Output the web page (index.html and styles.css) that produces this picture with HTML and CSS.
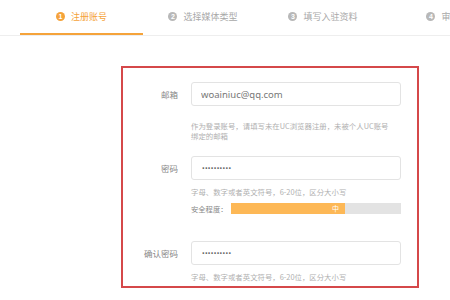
FILE: index.html
```html
<!DOCTYPE html>
<html lang="zh-CN">
<head>
    <meta charset="UTF-8">
    <meta name="viewport" content="width=device-width, initial-scale=1.0">
    <title>注册账号</title>
    <link rel="stylesheet" href="styles.css">
</head>
<body>
    <!-- Steps -->
    <div class="steps">
        <div class="step step-first active"><span class="num">1</span>注册账号</div>
        <div class="step"><span class="num">2</span>选择媒体类型</div>
        <div class="step"><span class="num">3</span>填写入驻资料</div>
        <div class="step"><span class="num">4</span>审核</div>
    </div>

    <form class="reg-box" action="/register" method="post">
        <div class="field">
            <label for="email">邮箱</label>
            <input type="text" id="email" name="email" value="woainiuc@qq.com">
            <p class="hint hint-email">作为登录账号，请填写未在UC浏览器注册，未被个人UC账号绑定的邮箱</p>
        </div>

        <div class="field field-password">
            <label for="password">密码</label>
            <input type="password" id="password" name="password" class="pwd" value="abcdefghij">
            <p class="hint">字母、数字或者英文符号，6-20位，区分大小写</p>
            <div class="strength">
                <span>安全程度：</span>
                <div class="bar"><div class="bar-fill" style="width: 67%;">中</div></div>
            </div>
        </div>

        <div class="field field-confirm">
            <label for="confirm">确认密码</label>
            <input type="password" id="confirm" name="confirm" class="pwd" value="abcdefghij">
            <p class="hint">字母、数字或者英文符号，6-20位，区分大小写</p>
        </div>
    </form>
</body>
</html>
```

FILE: styles.css
```css
body {
    margin: 0;
    padding: 0;
    background: #ffffff;
    font-family: "Noto Sans CJK SC", "Noto Sans", sans-serif;
    color: #666666;
    overflow: hidden;
}

/* Steps bar */
.steps {
    display: flex;
    padding-left: 20px;
    border-bottom: 1px solid #eeeeee;
    overflow: hidden;
}
.step {
    flex-shrink: 0;
    width: 120px;
    height: 34px;
    display: flex;
    justify-content: center;
    align-items: center;
    border-bottom: 2px solid transparent;
    font-size: 9px;
    color: #a8a8a8;
    white-space: nowrap;
    box-sizing: content-box;
    margin-top: -1px;
}
.step-first {
    width: 123px;
}
.step.active {
    color: #f5a33a;
    border-bottom-color: #f5a33a;
}
.num {
    width: 9px;
    height: 9px;
    border-radius: 50%;
    background: #b8b8b8;
    color: #ffffff;
    font-size: 7px;
    font-weight: bold;
    line-height: 9px;
    text-align: center;
    margin-right: 6px;
    font-family: "Liberation Sans", sans-serif;
}
.active .num {
    background: #f5a33a;
}

/* Form box */
.reg-box {
    width: 294px;
    margin: 30px 0 0 121px;
    padding: 14px 0 4px;
    border: 2px solid #d5484a;
}
.field {
    display: grid;
    grid-template-columns: 55px 210px;
    column-gap: 13px;
    align-items: center;
}
.field label {
    text-align: right;
    font-size: 8.5px;
    color: #888888;
}
.field input {
    box-sizing: border-box;
    height: 24px;
    padding: 0 9px;
    border: 1px solid #e3e3e3;
    border-radius: 3px;
    font-family: "Noto Sans", sans-serif;
    font-size: 9.5px;
    color: #777777;
    outline: none;
}
.field input.pwd {
    font-size: 7px;
    letter-spacing: 0.3px;
    padding-left: 10px;
    color: #666666;
}
.hint {
    grid-column: 2;
    margin: 7px 0 0;
    font-size: 7.4px;
    line-height: 10px;
    color: #b0b0b0;
}
.hint-email {
    margin-top: 15px;
    padding-right: 5.2px;
}
.field-password {
    margin-top: 15px;
}
.field-confirm {
    margin-top: 27px;
}

/* Strength meter */
.strength {
    grid-column: 2;
    display: flex;
    align-items: center;
    margin-top: 6px;
    font-size: 7.3px;
    color: #888888;
}
.strength span {
    width: 40px;
}
.bar {
    flex: 1;
    height: 11px;
    background: #e3e3e3;
}
.bar-fill {
    height: 100%;
    background: #fdb856;
    color: #ffffff;
    font-size: 7px;
    line-height: 11px;
    text-align: right;
    padding-right: 6px;
    box-sizing: border-box;
}
```
